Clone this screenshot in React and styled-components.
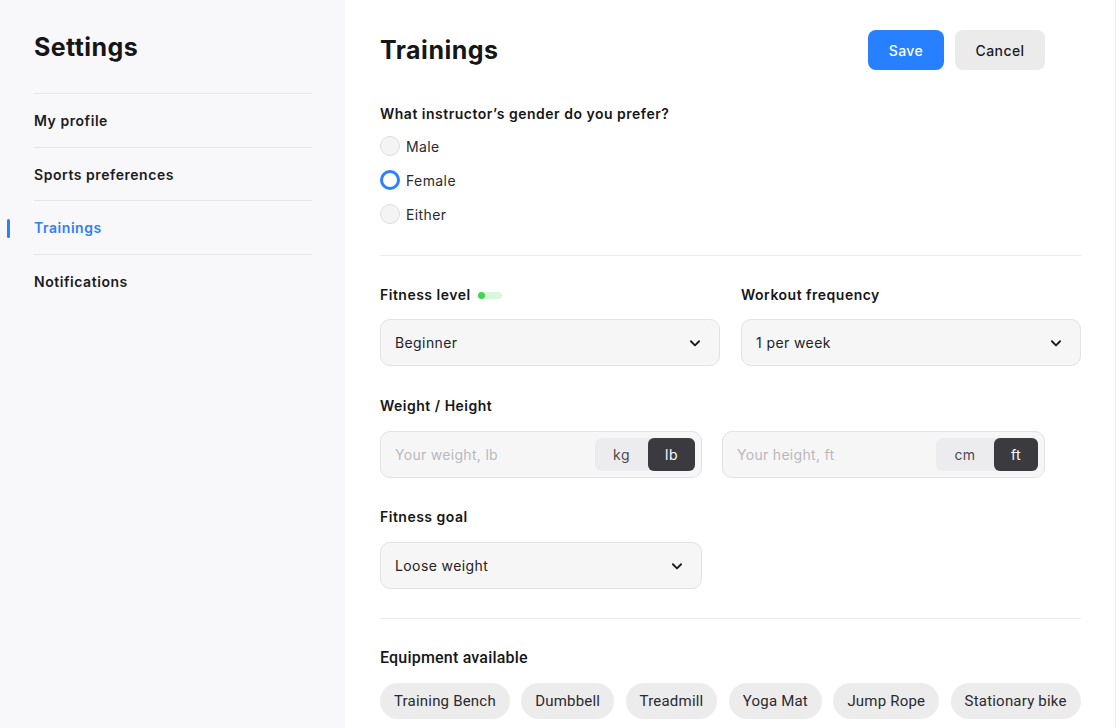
import React from "react";
import styled, { createGlobalStyle } from "styled-components";

const Global = createGlobalStyle`
  html, body { margin: 0; padding: 0; background: #fff; }
  body { font-family: Inter, "Noto Sans", sans-serif; color: #1b1b1f; letter-spacing: 0.4px; -webkit-font-smoothing: antialiased; }
  * { box-sizing: border-box; }
`;

const Page = styled.div`
  display: flex;
  width: 1116px;
  height: 728px;
  overflow: hidden;
`;

const Sidebar = styled.aside`
  width: 345px;
  flex-shrink: 0;
  background: #f8f8fa;
  padding: 33px 33px 0 34px;
`;

const SideTitle = styled.h1`
  margin: 0 0 32px;
  font-size: 25px;
  font-weight: 700;
  line-height: 28px;
  letter-spacing: 0.4px;
  color: #161618;
`;

const NavList = styled.nav`
  display: flex;
  flex-direction: column;
`;

const NavItem = styled.div`
  position: relative;
  height: 53.7px;
  display: flex;
  align-items: center;
  border-top: 1px solid #e6e6ea;
  font-size: 14px;
  font-weight: 600;
  letter-spacing: 0.55px;
  color: ${(p) => (p.$active ? "#2f7ff7" : "#1b1b1f")};
  &::before {
    content: "";
    display: ${(p) => (p.$active ? "block" : "none")};
    position: absolute;
    left: -27px;
    top: 18px;
    width: 3px;
    height: 19px;
    border-radius: 2px;
    background: #2f7ff7;
  }
`;

const Main = styled.main`
  flex: 1;
  padding: 30px 34px 0 35px;
  border-right: 1px solid #ececef;
`;

const Header = styled.div`
  display: flex;
  align-items: center;
  justify-content: space-between;
  margin-bottom: 35px;
`;

const Title = styled.h2`
  margin: 0;
  font-size: 25px;
  font-weight: 700;
  letter-spacing: 0.5px;
  color: #161618;
`;

const Buttons = styled.div`
  display: flex;
  gap: 11px;
  margin-right: 36px;
`;

const Button = styled.button`
  height: 40px;
  width: ${(p) => (p.$primary ? "76px" : "90px")};
  padding: 0;
  border: none;
  border-radius: 8px;
  font-family: Inter, sans-serif;
  font-size: 14px;
  font-weight: 500;
  letter-spacing: 0.4px;
  background: ${(p) => (p.$primary ? "#2680ff" : "#ebebec")};
  color: ${(p) => (p.$primary ? "#fff" : "#1b1b1f")};
`;

const Label = styled.div`
  display: flex;
  align-items: center;
  gap: 7px;
  font-size: 14px;
  font-weight: 600;
  line-height: 18px;
  letter-spacing: 0.5px;
  color: #161618;
  margin-top: ${(p) => p.$mt || "0"};
  margin-bottom: ${(p) => p.$mb || "15px"};
`;

const RadioGroup = styled.div`
  display: flex;
  flex-direction: column;
  gap: 14px;
`;

const RadioRow = styled.label`
  display: flex;
  align-items: center;
  gap: 6px;
  font-size: 14px;
  color: #2a2a2e;
  height: 20px;
`;

const RadioCircle = styled.span`
  width: 20px;
  height: 20px;
  border-radius: 50%;
  flex-shrink: 0;
  background: ${(p) => (p.$checked ? "#fff" : "#f4f4f5")};
  border: ${(p) => (p.$checked ? "3px solid #2a80ff" : "1px solid #dedee1")};
`;

const Divider = styled.hr`
  border: none;
  border-top: 1px solid #ebebee;
  margin: ${(p) => p.$m};
`;

const Grid = styled.div`
  display: grid;
  grid-template-columns: 1fr 1fr;
  column-gap: 21px;
`;

const Field = styled.div`
  display: flex;
  flex-direction: column;
`;

const Select = styled.div`
  height: 47px;
  width: ${(p) => p.$w || "auto"};
  border: 1px solid #e2e2e5;
  border-radius: 10px;
  background: #f6f6f7;
  display: flex;
  align-items: center;
  justify-content: space-between;
  padding: 0 17px 0 14px;
  font-size: 14px;
  color: #222226;
`;

const LevelTrack = styled.span`
  width: 24px;
  height: 7px;
  border-radius: 4px;
  background: #d9f7dc;
  position: relative;
  &::after {
    content: "";
    position: absolute;
    left: 0;
    top: 0;
    width: 7px;
    height: 7px;
    border-radius: 50%;
    background: #43d454;
  }
`;

const InputsRow = styled.div`
  display: flex;
  gap: 20px;
`;

const UnitInput = styled.div`
  width: ${(p) => p.$w};
  height: 47px;
  border: 1px solid #e2e2e5;
  border-radius: 10px;
  background: #f6f6f7;
  display: flex;
  align-items: center;
  justify-content: space-between;
  padding: 0 6px 0 14px;
`;

const Placeholder = styled.span`
  font-size: 14px;
  letter-spacing: 0.3px;
  color: #b8b8bc;
`;

const Toggle = styled.div`
  display: flex;
  background: #ececee;
  border-radius: 7px;
  height: 33px;
`;

const ToggleOpt = styled.span`
  width: ${(p) => p.$w};
  display: flex;
  align-items: center;
  justify-content: center;
  border-radius: 6px;
  font-size: 14px;
  background: ${(p) => (p.$active ? "#3b3b3f" : "transparent")};
  color: ${(p) => (p.$active ? "#fff" : "#4a4a4e")};
`;

const Chips = styled.div`
  display: flex;
  gap: 11.4px;
`;

const Chip = styled.span`
  height: 36px;
  padding: 0 14px;
  border-radius: 18px;
  background: #ececed;
  display: flex;
  align-items: center;
  font-family: Roboto, sans-serif;
  font-size: 15px;
  letter-spacing: 0.2px;
  color: #2a2a2e;
`;

const EquipLabel = styled(Label)`
  font-family: Roboto, sans-serif;
  font-weight: 500;
  font-size: 16px;
  letter-spacing: 0.2px;
`;

const Chevron = () => (
  <svg width="14" height="14" viewBox="0 0 24 24" fill="none" stroke="#1b1b1f" strokeWidth="3.2" strokeLinecap="round" strokeLinejoin="round">
    <path d="M5 9l7 7 7-7" />
  </svg>
);

export default function App() {
  return (
    <Page>
      <Global />
      <Sidebar>
        <SideTitle>Settings</SideTitle>
        <NavList>
          <NavItem>My profile</NavItem>
          <NavItem>Sports preferences</NavItem>
          <NavItem $active>Trainings</NavItem>
          <NavItem>Notifications</NavItem>
        </NavList>
      </Sidebar>
      <Main>
        <Header>
          <Title>Trainings</Title>
          <Buttons>
            <Button $primary>Save</Button>
            <Button>Cancel</Button>
          </Buttons>
        </Header>

        <Label $mb="13px">What instructor’s gender do you prefer?</Label>
        <RadioGroup>
          <RadioRow><RadioCircle />Male</RadioRow>
          <RadioRow><RadioCircle $checked />Female</RadioRow>
          <RadioRow><RadioCircle />Either</RadioRow>
        </RadioGroup>

        <Divider $m="31px 0 30px" />

        <Grid>
          <Field>
            <Label>Fitness level <LevelTrack /></Label>
            <Select>Beginner<Chevron /></Select>
          </Field>
          <Field>
            <Label>Workout frequency</Label>
            <Select>1 per week<Chevron /></Select>
          </Field>
        </Grid>

        <Label $mt="31px" $mb="16px">Weight / Height</Label>
        <InputsRow>
          <UnitInput $w="322px">
            <Placeholder>Your weight, lb</Placeholder>
            <Toggle>
              <ToggleOpt $w="53px">kg</ToggleOpt>
              <ToggleOpt $w="47px" $active>lb</ToggleOpt>
            </Toggle>
          </UnitInput>
          <UnitInput $w="323px">
            <Placeholder>Your height, ft</Placeholder>
            <Toggle>
              <ToggleOpt $w="58px">cm</ToggleOpt>
              <ToggleOpt $w="44px" $active>ft</ToggleOpt>
            </Toggle>
          </UnitInput>
        </InputsRow>

        <Label $mt="30px" $mb="16px">Fitness goal</Label>
        <Select $w="322px">Loose weight<Chevron /></Select>

        <Divider $m="29px 0 30px" />

        <EquipLabel $mb="16px">Equipment available</EquipLabel>
        <Chips>
          <Chip>Training Bench</Chip>
          <Chip>Dumbbell</Chip>
          <Chip>Treadmill</Chip>
          <Chip>Yoga Mat</Chip>
          <Chip>Jump Rope</Chip>
          <Chip>Stationary bike</Chip>
        </Chips>
      </Main>
    </Page>
  );
}
